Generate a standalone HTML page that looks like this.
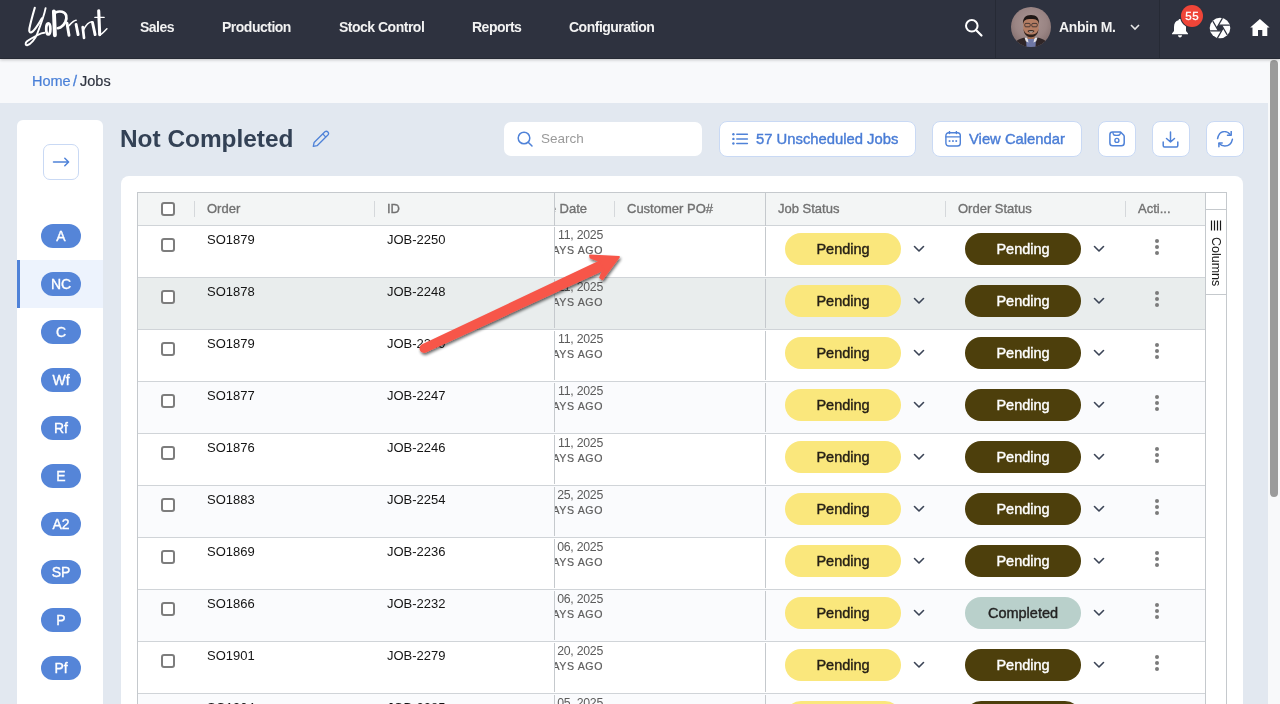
<!DOCTYPE html>
<html><head><meta charset="utf-8">
<style>
*{box-sizing:border-box;margin:0;padding:0}
html,body{width:1280px;height:704px;overflow:hidden}
body{font-family:"Liberation Sans",sans-serif;background:#e2e8f0;position:relative;will-change:transform}
.abs{position:absolute}
#nav{left:0;top:0;width:1280px;height:59px;background:#2e323f;border-bottom:1px solid #262a34;box-shadow:0 1px 3px rgba(0,0,0,.22);z-index:5}
.nv{position:absolute;top:19px;color:#f2f2f2;font-size:14px;font-weight:700;letter-spacing:-0.5px;line-height:16px}
#crumb{left:0;top:59px;width:1280px;height:44px;background:#f8f9fb}
#scroll{left:1268px;top:59px;width:12px;height:645px;background:#f8f9fa;z-index:4}
#thumb{left:1270px;top:60px;width:8px;height:437px;background:#9b9b9b;border-radius:4px;z-index:4}
#side{left:17px;top:120px;width:86px;height:620px;background:#fff;border-radius:6px}
.pill{position:absolute;left:24px;width:40px;height:24px;border-radius:12px;background:#5585d8;color:#fff;font-size:14px;font-weight:400;-webkit-text-stroke:0.35px #fff;text-align:center;line-height:24px}
#card{left:121px;top:176px;width:1122px;height:600px;background:#fff;border-radius:8px}
.btn{position:absolute;top:121px;height:36px;background:#fff;border:1px solid #c9d9f4;border-radius:8px}
.btxt{position:absolute;color:#4a7dd6;font-size:14.8px;font-weight:400;-webkit-text-stroke:0.4px #4a7dd6;line-height:17px}
#grid{left:137px;top:192px;width:1090px;height:600px;border:1px solid #c5c9cd;background:#fff}
.hdr{position:absolute;top:193px;height:32px;background:#f3f5f5}
.ht{position:absolute;top:201px;white-space:nowrap;color:#717171;font-size:13px;font-weight:400;-webkit-text-stroke:0.35px #717171;line-height:15px}
.sep{position:absolute;top:201px;width:1px;height:16px;background:#d5d8db}
.row{position:absolute;left:138px;width:1067px;height:51px}
.rl{position:absolute;left:138px;width:1067px;height:1px;background:#d0d4d8}
.cb{position:absolute;left:161px;width:14px;height:14px;border:2px solid #7d7d7d;border-radius:3px;background:#fff}
.ct{position:absolute;color:#141414;font-size:13px;line-height:15px}
.dt{position:absolute;left:558px;color:#5b5b5b;font-size:11.5px;line-height:13px}
.ago{position:absolute;left:554px;color:#5e5e5e;font-size:10.5px;font-weight:700;letter-spacing:0.4px;line-height:12px}
.ps{position:absolute;height:32px;border-radius:16px;text-align:center;font-size:14.5px;font-weight:400;-webkit-text-stroke:0.4px currentColor;line-height:33px}
.y{left:785px;width:116px;background:#fae77c;color:#262016}
.d{left:965px;width:116px;background:#4d3f0c;color:#fff}
.g{left:965px;width:116px;background:#b9d0cb;color:#232323}
.chev{position:absolute;width:12px;height:8px}
.dots{position:absolute;left:1155px;width:4px}
.dots i{display:block;width:4px;height:4px;border-radius:2px;background:#7b7b7b;margin-bottom:2px}
</style></head><body>

<div id="nav" class="abs">
  <svg class="abs" style="left:24px;top:5px" width="86" height="44" viewBox="0 0 86 44">
    <g fill="none" stroke="#fff" stroke-linecap="round" stroke-linejoin="round">
      <path d="M10.8 2.8 C9 9 6.5 18 5.4 23.5 C4.9 26.5 5.8 28 7.5 27.3 C10 26 14 20 17.8 13.4" stroke-width="2.1"/>
      <path d="M21.6 3.1 C20.5 9 17 19 13.1 29.1 C11.5 33.5 6.5 39.5 3.2 40.2 C1.2 40.6 1.2 38 2.8 36.5 C5.5 34 10 32 14.4 29.7 C16.5 28.5 18.5 28 20.3 27.8" stroke-width="1.9"/>
      <ellipse cx="24.3" cy="23.9" rx="2.1" ry="5.6" stroke-width="2.7"/>
      <path d="M29.9 6.4 L30.9 30.2" stroke-width="3.9"/>
      <path d="M31.5 7.4 C36 5.6 41 6.6 42.2 10.5 C43.2 14.5 41 19.5 36.5 22.4 L33.8 23.2" stroke-width="2.7"/>
      <path d="M43 18.2 L45 30.2" stroke-width="2.9"/>
      <path d="M45 20.6 C47 18.5 49.5 15.5 52.1 15.3" stroke-width="1.6"/>
      <path d="M52.1 19.5 L54.1 29.6" stroke-width="2.9"/>
      <path d="M58.7 22 L60 32.8" stroke-width="2.7"/>
      <path d="M59.3 25.1 C61.5 21 64.5 17 67.8 16.8" stroke-width="1.6"/>
      <path d="M68.5 17.5 L71.1 29.6" stroke-width="2.9"/>
      <path d="M74.7 5.8 L75.7 29.6" stroke-width="3.1"/>
      <path d="M70.9 12.4 L80.1 12.4" stroke-width="1.4"/>
      <path d="M75.9 30.2 C78 29 80.5 26 82.9 23.8" stroke-width="1.5"/>
    </g>
  </svg>
  <div class="nv" style="left:140px">Sales</div>
  <div class="nv" style="left:222px">Production</div>
  <div class="nv" style="left:339px">Stock Control</div>
  <div class="nv" style="left:472px">Reports</div>
  <div class="nv" style="left:569px">Configuration</div>
  <!-- search -->
  <svg class="abs" style="left:964px;top:18px" width="20" height="20" viewBox="0 0 20 20"><circle cx="7.8" cy="7.8" r="5.8" fill="none" stroke="#fff" stroke-width="2"/><path d="M12 12 L17.5 17.5" stroke="#fff" stroke-width="2.2" stroke-linecap="round"/></svg>
  <div class="abs" style="left:995px;top:0;width:1px;height:59px;background:#262a35"></div>
  <!-- avatar -->
  <svg class="abs" style="left:1011px;top:7px" width="40" height="40" viewBox="0 0 40 40">
    <defs><clipPath id="avc"><circle cx="20" cy="20" r="20"/></clipPath>
    <radialGradient id="avg" cx="50%" cy="40%" r="65%"><stop offset="0" stop-color="#a99593"/><stop offset="0.6" stop-color="#9a8584"/><stop offset="1" stop-color="#7f6b6a"/></radialGradient></defs>
    <g clip-path="url(#avc)">
      <rect width="40" height="40" fill="url(#avg)"/>
      <path d="M2 40 C3 34 8 32 13.5 30.5 L26.5 30.5 C32 32 37 34 38 40 Z" fill="#2f2628"/>
      <path d="M15 31 L25 31 L24.5 40 L15.5 40 Z" fill="#6f78a6"/>
      <path d="M13.5 30.5 L16.5 30.5 L17.5 35.5 L14.8 34.2 Z M26.5 30.5 L23.5 30.5 L22.5 35.5 L25.2 34.2 Z" fill="#e6e4e8"/>
      <path d="M16.5 26 L23.5 26 L23.5 32 L16.5 32 Z" fill="#a06c52"/>
      <path d="M12.2 17 C12.2 10.5 15 8.5 20 8.5 C25 8.5 27.8 10.5 27.8 17 L27.5 23 C26.5 27.5 23.5 30 20 30 C16.5 30 13.5 27.5 12.5 23 Z" fill="#b47d63"/>
      <path d="M12.5 21.5 C12.8 27.5 16 30.2 20 30.2 C24 30.2 27.2 27.5 27.5 21.5 C26.8 25.8 24.5 27.6 20 27.6 C15.5 27.6 13.2 25.8 12.5 21.5 Z" fill="#2d201b"/>
      <path d="M16.5 24 C18 22.8 22 22.8 23.5 24 C22.5 26 17.5 26 16.5 24 Z" fill="#3a2a23"/>
      <path d="M17.6 24.5 C19 25.9 21 25.9 22.4 24.5 Z" fill="#efe6de"/>
      <path d="M12 17.5 C11.5 11 14.5 8 20 8 C25.5 8 28.5 11 28 17.5 C27.3 13.2 25.5 12 20 12 C14.5 12 12.7 13.2 12 17.5 Z" fill="#1e1715"/>
      <g fill="none" stroke="#3b3130" stroke-width="0.9"><rect x="13.8" y="16.4" width="5.4" height="3.4" rx="1"/><rect x="20.8" y="16.4" width="5.4" height="3.4" rx="1"/></g>
    </g>
  </svg>
  <div class="nv" style="left:1059px;letter-spacing:-0.3px">Anbin M.</div>
  <svg class="abs" style="left:1129px;top:23px" width="12" height="8" viewBox="0 0 12 8"><path d="M2 2 L6 6 L10 2" fill="none" stroke="#e8e8e8" stroke-width="1.6"/></svg>
  <div class="abs" style="left:1159px;top:0;width:1px;height:59px;background:#262a35"></div>
  <!-- bell -->
  <svg class="abs" style="left:1171px;top:18px" width="18" height="20" viewBox="0 0 18 20"><path d="M9 1 C10 1 10.5 1.6 10.5 2.3 C13.5 3 15 5.5 15 9 L15 13 L17 15.5 L17 16.2 L1 16.2 L1 15.5 L3 13 L3 9 C3 5.5 4.5 3 7.5 2.3 C7.5 1.6 8 1 9 1 Z" fill="#fff"/><path d="M7 17.3 L11 17.3 C11 18.6 10 19.5 9 19.5 C8 19.5 7 18.6 7 17.3Z" fill="#fff"/></svg>
  <div class="abs" style="left:1181px;top:5px;width:22px;height:22px;border-radius:11px;background:#ef4538;box-shadow:0 0 0 1px #2e323f;color:#fff;font-size:11.5px;letter-spacing:0.5px;text-indent:0.5px;font-weight:400;-webkit-text-stroke:0.35px #fff;text-align:center;line-height:23px">55</div>
  <!-- aperture -->
  <svg class="abs" style="left:1209px;top:17px" width="22" height="22" viewBox="-11 -11 22 22">
    <defs><clipPath id="apc"><circle r="10.3"/></clipPath></defs>
    <circle r="10.3" fill="#fff"/>
    <g clip-path="url(#apc)" stroke="#2e323f" stroke-width="1.3">
      <path d="M-1.6 -2.8 L12 -2.8"/>
      <path d="M-1.6 -2.8 L12 -2.8" transform="rotate(60)"/>
      <path d="M-1.6 -2.8 L12 -2.8" transform="rotate(120)"/>
      <path d="M-1.6 -2.8 L12 -2.8" transform="rotate(180)"/>
      <path d="M-1.6 -2.8 L12 -2.8" transform="rotate(240)"/>
      <path d="M-1.6 -2.8 L12 -2.8" transform="rotate(300)"/>
    </g>
    <polygon points="1.6,-2.8 3.2,0 1.6,2.8 -1.6,2.8 -3.2,0 -1.6,-2.8" fill="#2e323f"/>
  </svg>
  <!-- home -->
  <svg class="abs" style="left:1250px;top:18px" width="21" height="19" viewBox="0 0 21 19"><path d="M9.9 0.9 L19.6 9.6 L17.3 9.6 L17.3 18.1 L12.3 18.1 L12.3 12 L8 12 L8 18.1 L2.5 18.1 L2.5 9.6 L0.2 9.6 Z" fill="#fff"/></svg>
</div>

<div id="crumb" class="abs">
  <div class="abs" style="left:32px;top:14px;font-size:14.5px;line-height:17px;color:#4a80d8;-webkit-text-stroke:0.2px #4a80d8">Home</div>
  <div class="abs" style="left:73px;top:14px;font-size:14.5px;line-height:17px;color:#4a80d8;-webkit-text-stroke:0.3px #4a80d8">/</div>
  <div class="abs" style="left:80px;top:14px;font-size:14.5px;line-height:17px;color:#2f3440;-webkit-text-stroke:0.2px #2f3440">Jobs</div>
</div>
<div id="scroll" class="abs"></div>
<div id="thumb" class="abs"></div>

<!-- sidebar -->
<div id="side" class="abs">
  <div class="abs" style="left:26px;top:24px;width:36px;height:36px;border:1px solid #c9d9f4;border-radius:7px">
    <svg class="abs" style="left:8px;top:10px" width="20" height="14" viewBox="0 0 20 14"><path d="M1.5 7 L16.5 7 M12.8 3.2 L16.6 7 L12.8 10.8" fill="none" stroke="#4f82d8" stroke-width="1.5" stroke-linecap="round" stroke-linejoin="round"/></svg>
  </div>
  <div class="pill" style="top:104px">A</div>
  <div class="abs" style="left:0;top:140px;width:86px;height:48px;background:#edf3fd"></div>
  <div class="abs" style="left:0;top:140px;width:3px;height:48px;background:#4f82d8"></div>
  <div class="pill" style="top:152px">NC</div>
  <div class="pill" style="top:200px">C</div>
  <div class="pill" style="top:248px">Wf</div>
  <div class="pill" style="top:296px">Rf</div>
  <div class="pill" style="top:344px">E</div>
  <div class="pill" style="top:392px">A2</div>
  <div class="pill" style="top:440px">SP</div>
  <div class="pill" style="top:488px">P</div>
  <div class="pill" style="top:536px">Pf</div>
</div>

<!-- title bar -->
<div class="abs" style="left:120px;top:125px;font-size:24.4px;font-weight:700;color:#334155;line-height:28px">Not Completed</div>
<svg class="abs" style="left:312px;top:130px" width="18" height="18" viewBox="0 0 18 18"><g fill="none" stroke="#4f82d8" stroke-width="1.3" stroke-linejoin="round"><path d="M1.3 16.4 L2.1 12.5 L12.9 1.8 A2.2 2.2 0 0 1 15.9 5.0 L5.1 15.7 Z"/><path d="M10.8 3.9 L13.8 7.1"/></g></svg>

<div class="abs" style="left:504px;top:122px;width:198px;height:34px;background:#fff;border-radius:7px">
  <svg class="abs" style="left:13px;top:9px" width="17" height="17" viewBox="0 0 17 17"><circle cx="7" cy="7" r="5.8" fill="none" stroke="#4f82d8" stroke-width="1.5"/><path d="M11.2 11.2 L15 15" stroke="#4f82d8" stroke-width="1.5" stroke-linecap="round"/></svg>
  <div class="abs" style="left:37px;top:9px;font-size:13.5px;color:#9a9a9a;line-height:16px">Search</div>
</div>

<div class="btn" style="left:719px;width:197px">
  <svg class="abs" style="left:11px;top:9px" width="18" height="16" viewBox="0 0 18 16"><g fill="#4f82d8"><circle cx="2.4" cy="3.3" r="1.2"/><circle cx="2.4" cy="7.9" r="1.2"/><circle cx="2.4" cy="12.5" r="1.2"/></g><g stroke="#4f82d8" stroke-width="1.5" stroke-linecap="round"><path d="M5.8 3.3 H16.4 M5.8 7.9 H16.4 M5.8 12.5 H16.4"/></g></svg>
  <div class="btxt" style="left:36px;top:9px">57 Unscheduled Jobs</div>
</div>
<div class="btn" style="left:932px;width:150px">
  <svg class="abs" style="left:12px;top:9px" width="17" height="17" viewBox="0 0 17 17"><g fill="none" stroke="#4f82d8" stroke-width="1.4"><rect x="0.9" y="1.7" width="14.4" height="13.3" rx="2.8"/><path d="M0.9 5.9 H15.3 M4.5 0.4 V2.6 M11.4 0.4 V2.6" stroke-linecap="round"/></g><g fill="#4f82d8"><rect x="3.7" y="9.2" width="1.7" height="1.7"/><rect x="7.1" y="9.2" width="1.7" height="1.7"/><rect x="10.4" y="9.2" width="1.7" height="1.7"/></g></svg>
  <div class="btxt" style="left:36px;top:9px">View Calendar</div>
</div>
<div class="btn" style="left:1098px;width:38px">
  <svg class="abs" style="left:9px;top:9px" width="18" height="17" viewBox="0 0 18 17"><path d="M4.5 1 H12.5 L15.8 4.3 C16 4.6 16.2 5 16.2 5.5 V12 C16.2 13.7 15 14.8 13.3 14.8 H4.7 C3 14.8 1.9 13.7 1.9 12 V3.7 C1.9 2 3 1 4.5 1Z" fill="none" stroke="#4f82d8" stroke-width="1.5" stroke-linejoin="round"/><path d="M4.9 1.2 C5.2 4.2 5.8 4.4 8.7 4.4 C11.6 4.4 12.2 4.2 12.5 1.2" fill="none" stroke="#4f82d8" stroke-width="1.4"/><circle cx="8.9" cy="9.4" r="2" fill="none" stroke="#4f82d8" stroke-width="1.4"/></svg>
</div>
<div class="btn" style="left:1152px;width:38px">
  <svg class="abs" style="left:9px;top:9px" width="17" height="17" viewBox="0 0 17 17"><path d="M8.5 1 V11 M4.5 7.5 L8.5 11 L12.5 7.5" fill="none" stroke="#4f82d8" stroke-width="1.5" stroke-linecap="round" stroke-linejoin="round"/><path d="M1.2 11 V14.5 C1.2 15.3 1.7 16 2.5 16 H14.5 C15.3 16 15.8 15.3 15.8 14.5 V11" fill="none" stroke="#4f82d8" stroke-width="1.5" stroke-linecap="round"/></svg>
</div>
<div class="btn" style="left:1206px;width:38px">
  <svg class="abs" style="left:9px;top:9px" width="18" height="18" viewBox="0 0 18 18"><g fill="none" stroke="#4f82d8" stroke-width="1.5" stroke-linecap="round" stroke-linejoin="round"><path d="M1.6 7.6 C2.5 3.5 5 0.6 8.4 0.6 C10.5 0.6 12.5 1.5 14 3.2"/><path d="M11.5 4.3 H15.2 V0.4"/><path d="M16.4 8.3 C15.5 12.5 12.5 15 8.8 15 C6.6 15 4.6 14 3.2 12.5"/><path d="M6.2 11.9 H2.9 V15.7"/></g></svg>
</div>

<div id="card" class="abs"></div>
<div id="grid" class="abs"></div>
<div id="rows"><div class="hdr" style="left:138px;width:1067px"></div>
<div class="rl" style="top:225px"></div>
<div class="sep" style="left:194px"></div>
<div class="sep" style="left:374px"></div>
<div class="sep" style="left:614px"></div>
<div class="sep" style="left:945px"></div>
<div class="sep" style="left:1125px"></div>
<div class="abs" style="left:161px;top:202px;width:14px;height:14px;border:2px solid #7d7d7d;border-radius:3px;background:#fff"></div>
<div class="ht" style="left:207px">Order</div>
<div class="ht" style="left:387px">ID</div>
<div class="ht" style="left:627px">Customer PO#</div>
<div class="ht" style="left:778px">Job Status</div>
<div class="ht" style="left:958px">Order Status</div>
<div class="ht" style="left:1138px">Acti...</div>
<div class="abs" style="left:554px;top:193px;width:60px;height:32px;overflow:hidden"><div class="ht" style="left:auto;right:27px;top:8px">Due Date</div></div>
<div class="row" style="top:226px;background:#ffffff"></div>
<div class="rl" style="top:277px"></div>
<div class="cb" style="top:238px"></div>
<div class="ct" style="left:207px;top:232px">SO1879</div>
<div class="ct" style="left:387px;top:232px">JOB-2250</div>
<div class="abs" style="left:554px;top:226px;width:60px;height:51px;overflow:hidden"><div class="abs" style="right:11px;top:2px;white-space:nowrap;color:#5b5b5b;font-size:12.3px;letter-spacing:-0.25px;line-height:14px">Mar 11, 2025</div><div class="abs" style="right:11px;top:18px;white-space:nowrap;color:#5e5e5e;font-size:10.6px;font-weight:400;-webkit-text-stroke:0.2px #5e5e5e;letter-spacing:0.6px;line-height:12px">26 DAYS AGO</div></div>
<div class="ps y" style="top:233px">Pending</div>
<div class="ps d" style="top:233px">Pending</div>
<svg class="chev" style="left:913px;top:245px" viewBox="0 0 12 8"><path d="M1.5 1.5 L6 6 L10.5 1.5" fill="none" stroke="#3b4456" stroke-width="1.6" stroke-linecap="round" stroke-linejoin="round"/></svg>
<svg class="chev" style="left:1093px;top:245px" viewBox="0 0 12 8"><path d="M1.5 1.5 L6 6 L10.5 1.5" fill="none" stroke="#3b4456" stroke-width="1.6" stroke-linecap="round" stroke-linejoin="round"/></svg>
<div class="dots" style="top:239px"><i></i><i></i><i></i></div>
<div class="row" style="top:278px;background:#e9eded"></div>
<div class="rl" style="top:329px"></div>
<div class="cb" style="top:290px"></div>
<div class="ct" style="left:207px;top:284px">SO1878</div>
<div class="ct" style="left:387px;top:284px">JOB-2248</div>
<div class="abs" style="left:554px;top:278px;width:60px;height:51px;overflow:hidden"><div class="abs" style="right:11px;top:2px;white-space:nowrap;color:#5b5b5b;font-size:12.3px;letter-spacing:-0.25px;line-height:14px">Mar 11, 2025</div><div class="abs" style="right:11px;top:18px;white-space:nowrap;color:#5e5e5e;font-size:10.6px;font-weight:400;-webkit-text-stroke:0.2px #5e5e5e;letter-spacing:0.6px;line-height:12px">26 DAYS AGO</div></div>
<div class="ps y" style="top:285px">Pending</div>
<div class="ps d" style="top:285px">Pending</div>
<svg class="chev" style="left:913px;top:297px" viewBox="0 0 12 8"><path d="M1.5 1.5 L6 6 L10.5 1.5" fill="none" stroke="#3b4456" stroke-width="1.6" stroke-linecap="round" stroke-linejoin="round"/></svg>
<svg class="chev" style="left:1093px;top:297px" viewBox="0 0 12 8"><path d="M1.5 1.5 L6 6 L10.5 1.5" fill="none" stroke="#3b4456" stroke-width="1.6" stroke-linecap="round" stroke-linejoin="round"/></svg>
<div class="dots" style="top:291px"><i></i><i></i><i></i></div>
<div class="row" style="top:330px;background:#ffffff"></div>
<div class="rl" style="top:381px"></div>
<div class="cb" style="top:342px"></div>
<div class="ct" style="left:207px;top:336px">SO1879</div>
<div class="ct" style="left:387px;top:336px">JOB-2249</div>
<div class="abs" style="left:554px;top:330px;width:60px;height:51px;overflow:hidden"><div class="abs" style="right:11px;top:2px;white-space:nowrap;color:#5b5b5b;font-size:12.3px;letter-spacing:-0.25px;line-height:14px">Mar 11, 2025</div><div class="abs" style="right:11px;top:18px;white-space:nowrap;color:#5e5e5e;font-size:10.6px;font-weight:400;-webkit-text-stroke:0.2px #5e5e5e;letter-spacing:0.6px;line-height:12px">26 DAYS AGO</div></div>
<div class="ps y" style="top:337px">Pending</div>
<div class="ps d" style="top:337px">Pending</div>
<svg class="chev" style="left:913px;top:349px" viewBox="0 0 12 8"><path d="M1.5 1.5 L6 6 L10.5 1.5" fill="none" stroke="#3b4456" stroke-width="1.6" stroke-linecap="round" stroke-linejoin="round"/></svg>
<svg class="chev" style="left:1093px;top:349px" viewBox="0 0 12 8"><path d="M1.5 1.5 L6 6 L10.5 1.5" fill="none" stroke="#3b4456" stroke-width="1.6" stroke-linecap="round" stroke-linejoin="round"/></svg>
<div class="dots" style="top:343px"><i></i><i></i><i></i></div>
<div class="row" style="top:382px;background:#fafbfd"></div>
<div class="rl" style="top:433px"></div>
<div class="cb" style="top:394px"></div>
<div class="ct" style="left:207px;top:388px">SO1877</div>
<div class="ct" style="left:387px;top:388px">JOB-2247</div>
<div class="abs" style="left:554px;top:382px;width:60px;height:51px;overflow:hidden"><div class="abs" style="right:11px;top:2px;white-space:nowrap;color:#5b5b5b;font-size:12.3px;letter-spacing:-0.25px;line-height:14px">Mar 11, 2025</div><div class="abs" style="right:11px;top:18px;white-space:nowrap;color:#5e5e5e;font-size:10.6px;font-weight:400;-webkit-text-stroke:0.2px #5e5e5e;letter-spacing:0.6px;line-height:12px">26 DAYS AGO</div></div>
<div class="ps y" style="top:389px">Pending</div>
<div class="ps d" style="top:389px">Pending</div>
<svg class="chev" style="left:913px;top:401px" viewBox="0 0 12 8"><path d="M1.5 1.5 L6 6 L10.5 1.5" fill="none" stroke="#3b4456" stroke-width="1.6" stroke-linecap="round" stroke-linejoin="round"/></svg>
<svg class="chev" style="left:1093px;top:401px" viewBox="0 0 12 8"><path d="M1.5 1.5 L6 6 L10.5 1.5" fill="none" stroke="#3b4456" stroke-width="1.6" stroke-linecap="round" stroke-linejoin="round"/></svg>
<div class="dots" style="top:395px"><i></i><i></i><i></i></div>
<div class="row" style="top:434px;background:#ffffff"></div>
<div class="rl" style="top:485px"></div>
<div class="cb" style="top:446px"></div>
<div class="ct" style="left:207px;top:440px">SO1876</div>
<div class="ct" style="left:387px;top:440px">JOB-2246</div>
<div class="abs" style="left:554px;top:434px;width:60px;height:51px;overflow:hidden"><div class="abs" style="right:11px;top:2px;white-space:nowrap;color:#5b5b5b;font-size:12.3px;letter-spacing:-0.25px;line-height:14px">Mar 11, 2025</div><div class="abs" style="right:11px;top:18px;white-space:nowrap;color:#5e5e5e;font-size:10.6px;font-weight:400;-webkit-text-stroke:0.2px #5e5e5e;letter-spacing:0.6px;line-height:12px">26 DAYS AGO</div></div>
<div class="ps y" style="top:441px">Pending</div>
<div class="ps d" style="top:441px">Pending</div>
<svg class="chev" style="left:913px;top:453px" viewBox="0 0 12 8"><path d="M1.5 1.5 L6 6 L10.5 1.5" fill="none" stroke="#3b4456" stroke-width="1.6" stroke-linecap="round" stroke-linejoin="round"/></svg>
<svg class="chev" style="left:1093px;top:453px" viewBox="0 0 12 8"><path d="M1.5 1.5 L6 6 L10.5 1.5" fill="none" stroke="#3b4456" stroke-width="1.6" stroke-linecap="round" stroke-linejoin="round"/></svg>
<div class="dots" style="top:447px"><i></i><i></i><i></i></div>
<div class="row" style="top:486px;background:#fafbfd"></div>
<div class="rl" style="top:537px"></div>
<div class="cb" style="top:498px"></div>
<div class="ct" style="left:207px;top:492px">SO1883</div>
<div class="ct" style="left:387px;top:492px">JOB-2254</div>
<div class="abs" style="left:554px;top:486px;width:60px;height:51px;overflow:hidden"><div class="abs" style="right:11px;top:2px;white-space:nowrap;color:#5b5b5b;font-size:12.3px;letter-spacing:-0.25px;line-height:14px">Mar 25, 2025</div><div class="abs" style="right:11px;top:18px;white-space:nowrap;color:#5e5e5e;font-size:10.6px;font-weight:400;-webkit-text-stroke:0.2px #5e5e5e;letter-spacing:0.6px;line-height:12px">12 DAYS AGO</div></div>
<div class="ps y" style="top:493px">Pending</div>
<div class="ps d" style="top:493px">Pending</div>
<svg class="chev" style="left:913px;top:505px" viewBox="0 0 12 8"><path d="M1.5 1.5 L6 6 L10.5 1.5" fill="none" stroke="#3b4456" stroke-width="1.6" stroke-linecap="round" stroke-linejoin="round"/></svg>
<svg class="chev" style="left:1093px;top:505px" viewBox="0 0 12 8"><path d="M1.5 1.5 L6 6 L10.5 1.5" fill="none" stroke="#3b4456" stroke-width="1.6" stroke-linecap="round" stroke-linejoin="round"/></svg>
<div class="dots" style="top:499px"><i></i><i></i><i></i></div>
<div class="row" style="top:538px;background:#ffffff"></div>
<div class="rl" style="top:589px"></div>
<div class="cb" style="top:550px"></div>
<div class="ct" style="left:207px;top:544px">SO1869</div>
<div class="ct" style="left:387px;top:544px">JOB-2236</div>
<div class="abs" style="left:554px;top:538px;width:60px;height:51px;overflow:hidden"><div class="abs" style="right:11px;top:2px;white-space:nowrap;color:#5b5b5b;font-size:12.3px;letter-spacing:-0.25px;line-height:14px">Mar 06, 2025</div><div class="abs" style="right:11px;top:18px;white-space:nowrap;color:#5e5e5e;font-size:10.6px;font-weight:400;-webkit-text-stroke:0.2px #5e5e5e;letter-spacing:0.6px;line-height:12px">31 DAYS AGO</div></div>
<div class="ps y" style="top:545px">Pending</div>
<div class="ps d" style="top:545px">Pending</div>
<svg class="chev" style="left:913px;top:557px" viewBox="0 0 12 8"><path d="M1.5 1.5 L6 6 L10.5 1.5" fill="none" stroke="#3b4456" stroke-width="1.6" stroke-linecap="round" stroke-linejoin="round"/></svg>
<svg class="chev" style="left:1093px;top:557px" viewBox="0 0 12 8"><path d="M1.5 1.5 L6 6 L10.5 1.5" fill="none" stroke="#3b4456" stroke-width="1.6" stroke-linecap="round" stroke-linejoin="round"/></svg>
<div class="dots" style="top:551px"><i></i><i></i><i></i></div>
<div class="row" style="top:590px;background:#fafbfd"></div>
<div class="rl" style="top:641px"></div>
<div class="cb" style="top:602px"></div>
<div class="ct" style="left:207px;top:596px">SO1866</div>
<div class="ct" style="left:387px;top:596px">JOB-2232</div>
<div class="abs" style="left:554px;top:590px;width:60px;height:51px;overflow:hidden"><div class="abs" style="right:11px;top:2px;white-space:nowrap;color:#5b5b5b;font-size:12.3px;letter-spacing:-0.25px;line-height:14px">Mar 06, 2025</div><div class="abs" style="right:11px;top:18px;white-space:nowrap;color:#5e5e5e;font-size:10.6px;font-weight:400;-webkit-text-stroke:0.2px #5e5e5e;letter-spacing:0.6px;line-height:12px">31 DAYS AGO</div></div>
<div class="ps y" style="top:597px">Pending</div>
<div class="ps g" style="top:597px">Completed</div>
<svg class="chev" style="left:913px;top:609px" viewBox="0 0 12 8"><path d="M1.5 1.5 L6 6 L10.5 1.5" fill="none" stroke="#3b4456" stroke-width="1.6" stroke-linecap="round" stroke-linejoin="round"/></svg>
<svg class="chev" style="left:1093px;top:609px" viewBox="0 0 12 8"><path d="M1.5 1.5 L6 6 L10.5 1.5" fill="none" stroke="#3b4456" stroke-width="1.6" stroke-linecap="round" stroke-linejoin="round"/></svg>
<div class="dots" style="top:603px"><i></i><i></i><i></i></div>
<div class="row" style="top:642px;background:#ffffff"></div>
<div class="rl" style="top:693px"></div>
<div class="cb" style="top:654px"></div>
<div class="ct" style="left:207px;top:648px">SO1901</div>
<div class="ct" style="left:387px;top:648px">JOB-2279</div>
<div class="abs" style="left:554px;top:642px;width:60px;height:51px;overflow:hidden"><div class="abs" style="right:11px;top:2px;white-space:nowrap;color:#5b5b5b;font-size:12.3px;letter-spacing:-0.25px;line-height:14px">Mar 20, 2025</div><div class="abs" style="right:11px;top:18px;white-space:nowrap;color:#5e5e5e;font-size:10.6px;font-weight:400;-webkit-text-stroke:0.2px #5e5e5e;letter-spacing:0.6px;line-height:12px">17 DAYS AGO</div></div>
<div class="ps y" style="top:649px">Pending</div>
<div class="ps d" style="top:649px">Pending</div>
<svg class="chev" style="left:913px;top:661px" viewBox="0 0 12 8"><path d="M1.5 1.5 L6 6 L10.5 1.5" fill="none" stroke="#3b4456" stroke-width="1.6" stroke-linecap="round" stroke-linejoin="round"/></svg>
<svg class="chev" style="left:1093px;top:661px" viewBox="0 0 12 8"><path d="M1.5 1.5 L6 6 L10.5 1.5" fill="none" stroke="#3b4456" stroke-width="1.6" stroke-linecap="round" stroke-linejoin="round"/></svg>
<div class="dots" style="top:655px"><i></i><i></i><i></i></div>
<div class="row" style="top:694px;background:#fafbfd"></div>
<div class="rl" style="top:745px"></div>
<div class="cb" style="top:706px"></div>
<div class="ct" style="left:207px;top:700px">SO1904</div>
<div class="ct" style="left:387px;top:700px">JOB-2285</div>
<div class="abs" style="left:554px;top:694px;width:60px;height:51px;overflow:hidden"><div class="abs" style="right:11px;top:2px;white-space:nowrap;color:#5b5b5b;font-size:12.3px;letter-spacing:-0.25px;line-height:14px">Mar 05, 2025</div><div class="abs" style="right:11px;top:18px;white-space:nowrap;color:#5e5e5e;font-size:10.6px;font-weight:400;-webkit-text-stroke:0.2px #5e5e5e;letter-spacing:0.6px;line-height:12px">32 DAYS AGO</div></div>
<div class="ps y" style="top:701px">Pending</div>
<div class="ps d" style="top:701px">Pending</div>
<svg class="chev" style="left:913px;top:713px" viewBox="0 0 12 8"><path d="M1.5 1.5 L6 6 L10.5 1.5" fill="none" stroke="#3b4456" stroke-width="1.6" stroke-linecap="round" stroke-linejoin="round"/></svg>
<svg class="chev" style="left:1093px;top:713px" viewBox="0 0 12 8"><path d="M1.5 1.5 L6 6 L10.5 1.5" fill="none" stroke="#3b4456" stroke-width="1.6" stroke-linecap="round" stroke-linejoin="round"/></svg>
<div class="dots" style="top:707px"><i></i><i></i><i></i></div>
<div class="abs" style="left:554px;top:193px;width:1px;height:33px;background:#c5c9cd"></div>
<div class="abs" style="left:765px;top:193px;width:1px;height:33px;background:#c5c9cd"></div>
<div class="abs" style="left:554px;top:227px;width:1px;height:49px;background:#c5c9cd"></div>
<div class="abs" style="left:765px;top:227px;width:1px;height:49px;background:#c5c9cd"></div>
<div class="abs" style="left:554px;top:279px;width:1px;height:49px;background:#c5c9cd"></div>
<div class="abs" style="left:765px;top:279px;width:1px;height:49px;background:#c5c9cd"></div>
<div class="abs" style="left:554px;top:331px;width:1px;height:49px;background:#c5c9cd"></div>
<div class="abs" style="left:765px;top:331px;width:1px;height:49px;background:#c5c9cd"></div>
<div class="abs" style="left:554px;top:383px;width:1px;height:49px;background:#c5c9cd"></div>
<div class="abs" style="left:765px;top:383px;width:1px;height:49px;background:#c5c9cd"></div>
<div class="abs" style="left:554px;top:435px;width:1px;height:49px;background:#c5c9cd"></div>
<div class="abs" style="left:765px;top:435px;width:1px;height:49px;background:#c5c9cd"></div>
<div class="abs" style="left:554px;top:487px;width:1px;height:49px;background:#c5c9cd"></div>
<div class="abs" style="left:765px;top:487px;width:1px;height:49px;background:#c5c9cd"></div>
<div class="abs" style="left:554px;top:539px;width:1px;height:49px;background:#c5c9cd"></div>
<div class="abs" style="left:765px;top:539px;width:1px;height:49px;background:#c5c9cd"></div>
<div class="abs" style="left:554px;top:591px;width:1px;height:49px;background:#c5c9cd"></div>
<div class="abs" style="left:765px;top:591px;width:1px;height:49px;background:#c5c9cd"></div>
<div class="abs" style="left:554px;top:643px;width:1px;height:49px;background:#c5c9cd"></div>
<div class="abs" style="left:765px;top:643px;width:1px;height:49px;background:#c5c9cd"></div>
<div class="abs" style="left:554px;top:695px;width:1px;height:49px;background:#c5c9cd"></div>
<div class="abs" style="left:765px;top:695px;width:1px;height:49px;background:#c5c9cd"></div>
<div class="abs" style="left:1205px;top:193px;width:1px;height:520px;background:#c5c9cd"></div>
<div class="abs" style="left:1206px;top:209px;width:20px;height:1px;background:#c5c9cd"></div>
<div class="abs" style="left:1206px;top:294px;width:20px;height:1px;background:#c5c9cd"></div>
<svg class="abs" style="left:1210px;top:220px" width="12" height="11" viewBox="0 0 12 11"><path d="M1.5 0.5 V10.5 M4.5 0.5 V10.5 M7.5 0.5 V10.5 M10.5 0.5 V10.5" stroke="#181818" stroke-width="1.2"/></svg>
<div class="abs" style="left:1209px;top:237px;width:14px;height:48px"><div class="abs" style="left:14px;top:0;transform-origin:0 0;transform:rotate(90deg);font-size:12.5px;line-height:14px;color:#181818;white-space:nowrap">Columns</div></div>
<svg class="abs" style="left:0;top:0;z-index:3" width="1280" height="704" viewBox="0 0 1280 704">
<defs><filter id="sh" x="-20%" y="-20%" width="140%" height="140%"><feGaussianBlur in="SourceAlpha" stdDeviation="1.7"/><feOffset dx="1" dy="2.4"/><feComponentTransfer><feFuncA type="linear" slope="0.6"/></feComponentTransfer><feMerge><feMergeNode/><feMergeNode in="SourceGraphic"/></feMerge></filter></defs>
<g filter="url(#sh)">
<path d="M422.06 344.13 L603.72 258.61 L608.28 268.39 L425.94 352.47 A4.6 4.6 0 0 1 422.06 344.13 Z" fill="#f7564a"/>
<path d="M619 257 L590 255.4 L590.4 257.6 L600.5 261.5 L603.5 269 L600 277.6 L602.4 279.2 Z" fill="#f7564a" stroke="#f7564a" stroke-width="1.8" stroke-linejoin="round"/>
</g></svg></div><!--/rows-->
</body></html>
